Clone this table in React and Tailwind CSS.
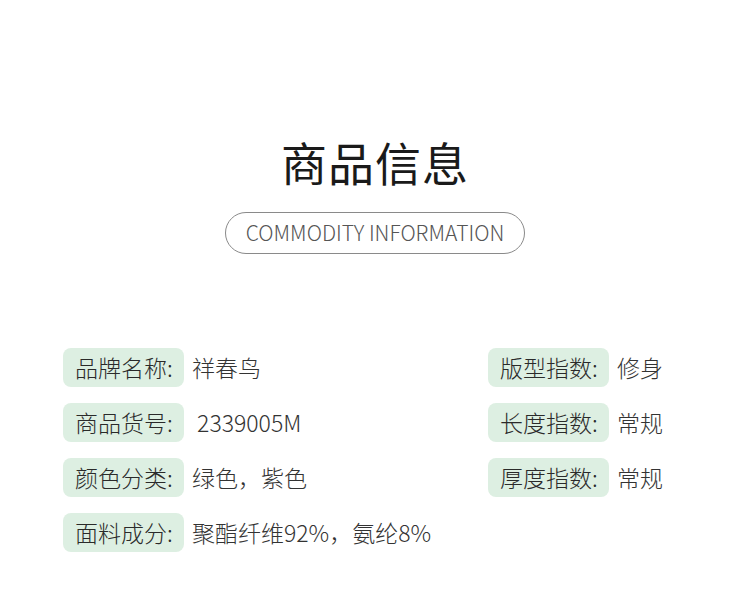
import React from "react";

const font = { fontFamily: '"Noto Sans CJK SC", "Noto Sans", sans-serif' };

function Row({ label, value }) {
  return (
    <div className="flex items-center h-[39px]">
      <div className="w-[121px] h-[39px] rounded-[8px] bg-[#ddefe2] flex items-center pl-[12px] text-[23px] leading-none font-light text-[#2a2a2a] whitespace-nowrap">
        {label}
      </div>
      <div className="ml-[8px] text-[23px] leading-none font-light text-[#333] whitespace-nowrap">{value}</div>
    </div>
  );
}

export default function App() {
  return (
    <div className="w-[750px] h-[591px] bg-white overflow-hidden" style={font}>
      <div className="flex flex-col items-center pt-[138px]">
        <div className="text-[46px] leading-none text-[#1a1a1a] tracking-[1px]">商品信息</div>
        <div className="mt-[28px] w-[300px] h-[42px] rounded-full border border-[#8a8a8a] flex items-center justify-center text-[21px] font-light text-[#555]">
          COMMODITY INFORMATION
        </div>
      </div>
      <div className="mt-[94px] pl-[63px] grid grid-cols-[425px_1fr] gap-y-[16px]">
        <Row label="品牌名称:" value="祥春鸟" />
        <Row label="版型指数:" value="修身" />
        <Row label="商品货号:" value={"\u00a02339005M"} />
        <Row label="长度指数:" value="常规" />
        <Row label="颜色分类:" value="绿色，紫色" />
        <Row label="厚度指数:" value="常规" />
        <Row label="面料成分:" value="聚酯纤维92%，氨纶8%" />
      </div>
    </div>
  );
}
